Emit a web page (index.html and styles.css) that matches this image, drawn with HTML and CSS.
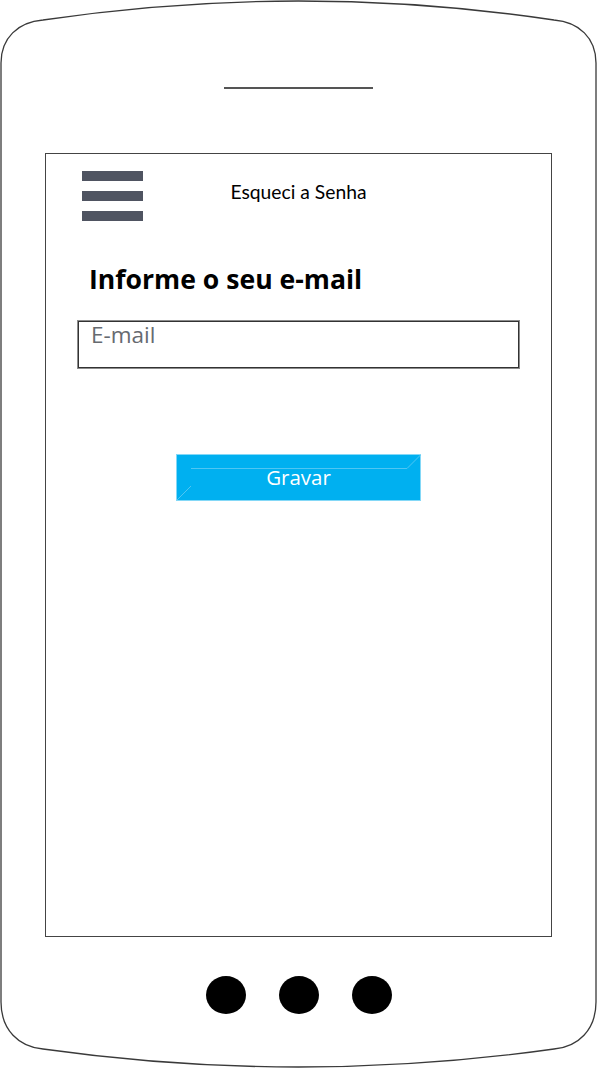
FILE: index.html
```html
<!DOCTYPE html>
<html lang="pt">
<head>
<meta charset="utf-8">
<title>Esqueci a Senha</title>
<link rel="stylesheet" href="styles.css">
</head>
<body>
<div class="phone">
  <svg class="frame" viewBox="0 0 597 1069" width="597" height="1069" aria-hidden="true">
    <path d="M1,63 C1,38 18,22 43,20 Q298.5,-18 554,20 C579,22 596,38 596,63 L596,1002 C596,1030 578,1047 554,1049 Q298.5,1085 43,1049 C19,1047 1,1030 1,1002 Z" fill="none" stroke="#3a3a3a" stroke-width="1.3"/>
  </svg>
  <div class="speaker"></div>
  <div class="screen">
    <header class="bar">
      <div class="menu"><span></span><span></span><span></span></div>
      <div class="title">Esqueci a Senha</div>
      <div></div>
    </header>
    <h1 class="heading">Informe o seu e-mail</h1>
    <div class="field">E-mail</div>
    <button class="save" type="button">
      <span class="save-label">Gravar</span>
      <svg class="bevel" viewBox="0 0 245 47" width="245" height="47" aria-hidden="true">
        <polyline points="15,14.5 231,14.5 244.5,1" fill="none" stroke="#4fc6f3" stroke-width="1"/>
        <line x1="1" y1="46" x2="15" y2="32" stroke="#4fc6f3" stroke-width="1"/>
      </svg>
    </button>
  </div>
  <div class="home"><span></span><span></span><span></span></div>
</div>
</body>
</html>
```

FILE: styles.css
```css
html, body {
  margin: 0;
  padding: 0;
  background: #ffffff;
}

.phone {
  position: relative;
  width: 597px;
  height: 1069px;
  display: flex;
  flex-direction: column;
  align-items: center;
  overflow: hidden;
}

.frame {
  position: absolute;
  left: 0;
  top: 0;
}

.speaker {
  margin-top: 87px;
  width: 149px;
  height: 2px;
  background: #555555;
}

.screen {
  position: relative;
  margin-top: 64px;
  width: 507px;
  height: 784px;
  box-sizing: border-box;
  border: 1px solid #444444;
  display: flex;
  flex-direction: column;
}

.bar {
  display: grid;
  grid-template-columns: 1fr auto 1fr;
  align-items: start;
  padding-top: 17px;
}

.menu {
  margin-left: 36px;
  width: 61px;
  display: flex;
  flex-direction: column;
  gap: 10px;
}

.menu span {
  display: block;
  height: 10px;
  background: #4f5461;
}

.title {
  margin-top: 9px;
  font-family: Lato, "Open Sans", sans-serif;
  font-size: 19.3px;
  line-height: 1.2;
  color: #000000;
  white-space: nowrap;
}

.heading {
  margin: 43px 0 0 43px;
  font-family: "Open Sans", sans-serif;
  font-weight: 700;
  font-size: 26.6px;
  line-height: 31px;
  color: #000000;
}

.field {
  margin: 25px 0 0 31px;
  width: 443px;
  height: 49px;
  box-sizing: border-box;
  border: 1px solid #8c8c8c;
  box-shadow: inset 0 0 0 1px #333333;
  padding: 1px 0 0 13px;
  font-family: "Open Sans", sans-serif;
  font-size: 22.5px;
  line-height: 26px;
  color: #666a70;
}

.save {
  position: relative;
  align-self: center;
  margin-top: 85px;
  width: 245px;
  height: 47px;
  box-sizing: border-box;
  padding: 0;
  border: 1px solid #84d8f7;
  background: #00b0f0;
  color: #ffffff;
  font-family: "Open Sans", sans-serif;
  font-size: 20.5px;
  line-height: 1;
  display: flex;
  align-items: center;
  justify-content: center;
}

.save-label {
  position: relative;
  top: 0px;
}

.bevel {
  position: absolute;
  left: -1px;
  top: -1px;
}

.home {
  margin-top: 39px;
  display: flex;
  gap: 33px;
}

.home span {
  display: block;
  width: 40px;
  height: 38px;
  border-radius: 50%;
  background: #000000;
}
```
